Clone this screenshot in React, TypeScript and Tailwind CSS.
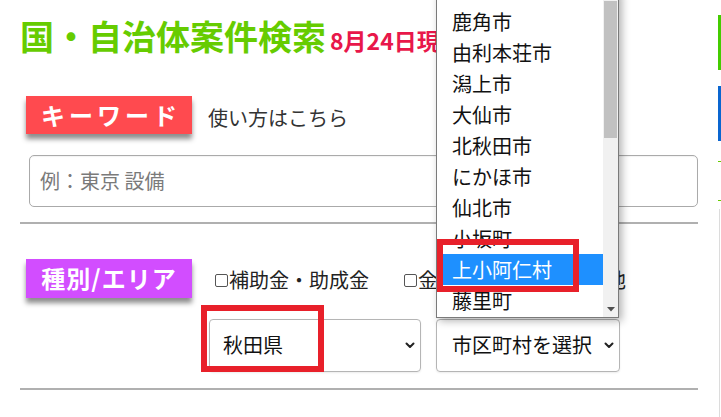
import React from "react";

const cities = [
  "鹿角市",
  "由利本荘市",
  "潟上市",
  "大仙市",
  "北秋田市",
  "にかほ市",
  "仙北市",
  "小坂町",
  "上小阿仁村",
  "藤里町",
];

function Chevron() {
  return (
    <svg width="10" height="7" viewBox="0 0 10 7" className="shrink-0">
      <path d="M1.5 1.5 L5 5 L8.5 1.5" fill="none" stroke="#222" strokeWidth="2" strokeLinecap="round" strokeLinejoin="round" />
    </svg>
  );
}

function Check({ label, className = "" }: { label: string; className?: string }) {
  return (
    <label className={"flex items-center text-[20px] leading-none text-[#222] " + className}>
      <span className="w-[13px] h-[13px] border border-[#555] rounded-[2px] bg-white mr-[1px] mt-[1px]" />
      <span>{label}</span>
    </label>
  );
}

export default function App() {
  return (
    <div className="relative w-[721px] h-[417px] overflow-hidden bg-white font-['Noto_Sans_CJK_JP','Noto_Sans',sans-serif]">
      <div className="flex">
        <main className="ml-[20px] w-[678px] shrink-0">
          <h1 className="pt-[16px] flex items-baseline whitespace-nowrap">
            <span className="text-[34px] leading-[40px] font-bold text-[#66cc00]">国・自治体案件検索</span>
            <span className="ml-[4px] text-[23px] font-bold text-[#e8174a]">8月24日現在の情報</span>
          </h1>

          <div className="mt-[38px] flex items-center">
            <div className="ml-[6px] w-[166px] h-[38px] bg-[#ff4a4f] shadow-[0_5px_5px_rgba(0,0,0,0.45)] flex items-center justify-center">
              <span className="text-white text-[24px] font-bold tracking-[4px] pl-[4px] leading-none">キーワード</span>
            </div>
            <span className="ml-[16px] mt-[6px] text-[20px] text-[#333] leading-none">使い方はこちら</span>
          </div>

          <div className="mt-[21px] ml-[9px] w-[669px] h-[52px] border border-[#aaa] rounded-[5px] flex items-center pl-[10px] shadow-[inset_0_1px_1px_rgba(0,0,0,0.05)]">
            <span className="text-[20px] text-[#7a7a7a] leading-none">例：東京 設備</span>
          </div>

          <div className="mt-[15px] h-[2px] bg-[#b0b0b0]" />

          <div className="mt-[35px] flex items-center">
            <div className="ml-[6px] w-[166px] h-[39px] bg-[#d24dff] shadow-[0_5px_5px_rgba(0,0,0,0.45)] flex items-center justify-center">
              <span className="text-white text-[24px] font-bold tracking-[1px] leading-none">種別/エリア</span>
            </div>
            <div className="ml-[23px] mt-[4px] flex items-center">
              <Check label="補助金・助成金" />
              <Check label="金融・税制" className="ml-[35px]" />
              <Check label="その他" className="ml-[34px]" />
            </div>
          </div>

          <div className="mt-[21px] ml-[189px] flex gap-[15px]">
            <div className="w-[212px] h-[53px] border border-[#b5b5b5] rounded-[4px] shadow-[0_1px_2px_rgba(0,0,0,0.08)] flex items-center justify-between pl-[13px] pr-[5px]">
              <span className="text-[20px] text-[#111] leading-none">秋田県</span>
              <Chevron />
            </div>
            <div className="w-[184px] h-[53px] border border-[#b5b5b5] rounded-[4px] shadow-[0_1px_2px_rgba(0,0,0,0.08)] flex items-center justify-between pl-[15px] pr-[5px]">
              <span className="text-[20px] text-[#111] leading-none">市区町村を選択</span>
              <Chevron />
            </div>
          </div>

          <div className="mt-[16px] h-[2px] bg-[#b0b0b0]" />
        </main>

        <aside className="ml-[20px] w-[3px] flex flex-col">
          <div className="mt-[15px] h-[55px] w-[3px] bg-[#44cc00]" />
          <div className="mt-[16px] h-[55px] w-[3px] bg-[#0a66d0]" />
          <div className="mt-[20px] h-[1px] w-[3px] bg-[#66cc00]" />
          <div className="mt-[38px] h-[1px] w-[3px] bg-[#66cc00]" />
          <div className="mt-[8px] h-[210px] w-[1px] ml-[1px] bg-[#dcdcdc]" />
        </aside>
      </div>

      {/* open dropdown list */}
      <div className="absolute left-[436px] top-[-10px] w-[183px] h-[328px] bg-white border border-[#7a7a7a] shadow-[3px_3px_8px_rgba(0,0,0,0.3)] flex overflow-hidden">
        <div className="w-[166px] flex flex-col mt-[15px]">
          {cities.map((c) => (
            <div
              key={c}
              className={
                c === "上小阿仁村"
                  ? "h-[31px] shrink-0 flex items-center pl-[15px] text-[20px] leading-none bg-[#1e90ff] text-white"
                  : "h-[31px] shrink-0 flex items-center pl-[15px] text-[20px] leading-none text-[#111]"
              }
            >
              {c}
            </div>
          ))}
        </div>
        <div className="w-[15px] bg-[#f1f1f1] flex flex-col justify-between pt-[10px]">
          <div className="mx-[1px] h-[137px] bg-[#c1c1c1]" />
          <div className="h-[15px] flex items-center justify-center">
            <svg width="8" height="5" viewBox="0 0 8 5">
              <path d="M0 0 L8 0 L4 4.5 Z" fill="#505050" />
            </svg>
          </div>
        </div>
      </div>

      {/* red annotation boxes */}
      <div className="absolute left-[201px] top-[305px] w-[123px] h-[67px] border-[6px] border-[#e8202a]" />
      <div className="absolute left-[437px] top-[239px] w-[142px] h-[53px] border-[6px] border-[#e8202a]" />
    </div>
  );
}
